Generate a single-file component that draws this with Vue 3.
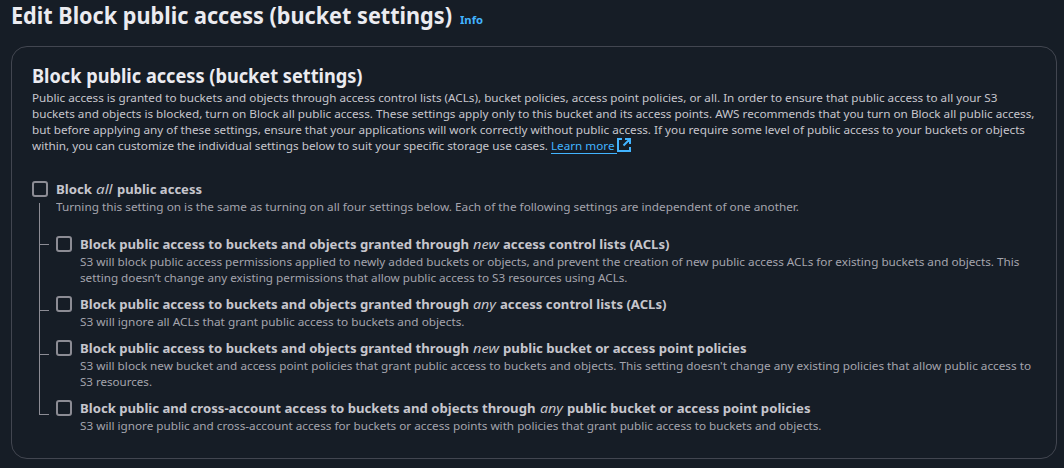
<script setup>
// Stretches or condenses a text run horizontally to a fixed width.
const vFit = {
  mounted(el, { value }) {
    const natural = el.getBoundingClientRect().width
    el.style.transform = `scaleX(${value / natural})`
    el.style.width = `${natural}px`
    el.style.marginRight = `${value - natural}px`
  },
}

const intro = [
  ['Public access is granted to buckets and objects through access control lists (ACLs), bucket policies, access point policies, or all. In order to ensure that public access to all your S3', 965.5],
  ['buckets and objects is blocked, turn on Block all public access. These settings apply only to this bucket and its access points. AWS recommends that you turn on Block all public access,', 1002.5],
  ['but before applying any of these settings, ensure that your applications will work correctly without public access. If you require some level of public access to your buckets or objects', 993],
]

const all = {
  title: [['Block', 36], ['all', 16.5], ['public access', 85]],
  lines: [['Turning this setting on is the same as turning on all four settings below. Each of the following settings are independent of one another.', 743]],
}

const settings = [
  {
    title: [['Block public access to buckets and objects granted through', 389], ['new', 26], ['access control lists (ACLs)', 166.5]],
    lines: [
      ['S3 will block public access permissions applied to newly added buckets or objects, and prevent the creation of new public access ACLs for existing buckets and objects. This', 939.5],
      ['setting doesn’t change any existing permissions that allow public access to S3 resources using ACLs.', 547.5],
    ],
  },
  {
    title: [['Block public access to buckets and objects granted through', 389], ['any', 23], ['access control lists (ACLs)', 166.5]],
    lines: [['S3 will ignore all ACLs that grant public access to buckets and objects.', 384.5]],
  },
  {
    title: [['Block public access to buckets and objects granted through', 389], ['new', 26], ['public bucket or access point policies', 243.5]],
    lines: [
      ["S3 will block new bucket and access point policies that grant public access to buckets and objects. This setting doesn't change any existing policies that allow public access to", 951],
      ['S3 resources.', 72],
    ],
  },
  {
    title: [['Block public and cross-account access to buckets and objects through', 455.5], ['any', 23], ['public bucket or access point policies', 243.5]],
    lines: [['S3 will ignore public and cross-account access for buckets or access points with policies that grant public access to buckets and objects.', 741.5]],
  },
]
</script>

<template>
  <main class="page">
    <header class="top">
      <h1><span v-fit="441" class="run">Edit Block public access (bucket settings)</span></h1>
      <a class="info"><span v-fit="23" class="run">Info</span></a>
    </header>

    <section class="panel">
      <h2><span v-fit="330.5" class="run">Block public access (bucket settings)</span></h2>
      <div class="copy intro">
        <div v-for="[text, w] in intro" :key="text"><span v-fit="w" class="run">{{ text }}</span></div>
        <div>
          <span v-fit="516" class="run">within, you can customize the individual settings below to suit your specific storage use cases.</span>
          <a class="learn"><span v-fit="63.5" class="run">Learn more</span></a>
          <svg class="ext" viewBox="0 0 14 14" width="14" height="14">
            <path d="M5 1H1v12h12V9M8 1h5v5M13 1L6.5 7.5" />
          </svg>
        </div>
      </div>

      <div class="row">
        <span class="box"></span>
        <div>
          <h3>
            <span v-for="([text, w], i) in all.title" :key="i" v-fit="w" class="run" :class="{ em: i === 1 }">{{ text }}</span>
          </h3>
          <div class="copy desc">
            <div v-for="[text, w] in all.lines" :key="text"><span v-fit="w" class="run">{{ text }}</span></div>
          </div>
        </div>
      </div>

      <div class="tree">
        <div v-for="(s, n) in settings" :key="n" class="row child">
          <span class="box"></span>
          <div>
            <h3>
              <span v-for="([text, w], i) in s.title" :key="i" v-fit="w" class="run" :class="{ em: i === 1 }">{{ text }}</span>
            </h3>
            <div class="copy desc">
              <div v-for="[text, w] in s.lines" :key="text"><span v-fit="w" class="run">{{ text }}</span></div>
            </div>
          </div>
        </div>
      </div>
    </section>
  </main>
</template>

<style>
body { background: #161d26; }
</style>

<style scoped>
.page {
  height: 468px;
  box-sizing: border-box;
  padding: 0 7px 0 11px;
  font-family: "Noto Sans", "Open Sans", sans-serif;
  color: #c6c6cd;
}
h1, h2, h3 { margin: 0; white-space: nowrap; }
.run { display: inline-block; flex: none; white-space: pre; transform-origin: 0 50%; }
.top { display: flex; align-items: baseline; gap: 8px; height: 46px; }
h1 { font-size: 24px; line-height: 30px; font-weight: 700; color: #ebebf0; }
.info { font-size: 11px; line-height: 16px; font-weight: 700; color: #42b4ff; }
.panel {
  height: 413px;
  box-sizing: border-box;
  border: 1px solid #424650;
  border-radius: 16px;
  padding: 17px 20px 0;
}
h2 { font-size: 20px; line-height: 24px; font-weight: 700; color: #ebebf0; }
.copy { font-size: 11px; line-height: 16px; }
.copy > div { height: 16px; display: flex; }
.intro { margin: 2px 0 27px; }
.learn { margin-left: 2.5px; width: 66px; height: 15px; color: #42b4ff; border-bottom: 1px solid #42b4ff; }
.ext { margin-left: 0.5px; fill: none; stroke: #42b4ff; stroke-width: 2; }
.row { display: flex; gap: 8px; }
.box { width: 16px; height: 16px; box-sizing: border-box; flex: none; border: 2px solid #8c8c94; border-radius: 3px; }
h3 { display: flex; gap: 4px; height: 18px; font-size: 12.8px; line-height: 16px; font-weight: 700; }
.em { font-style: italic; font-weight: 400; }
.desc { color: #a4a4ad; }
.tree {
  position: relative;
  display: flex;
  flex-direction: column;
  gap: 10px;
  margin: 21px 0 0 24px;
}
.tree::before {
  content: "";
  position: absolute;
  left: -17px;
  top: -33px;
  width: 1px;
  height: 212px;
  background: #8c8c94;
}
.child { position: relative; }
.child::before {
  content: "";
  position: absolute;
  left: -17px;
  top: 14px;
  width: 10px;
  height: 1px;
  background: #8c8c94;
}
.child:first-child::before { top: 8px; }
</style>
